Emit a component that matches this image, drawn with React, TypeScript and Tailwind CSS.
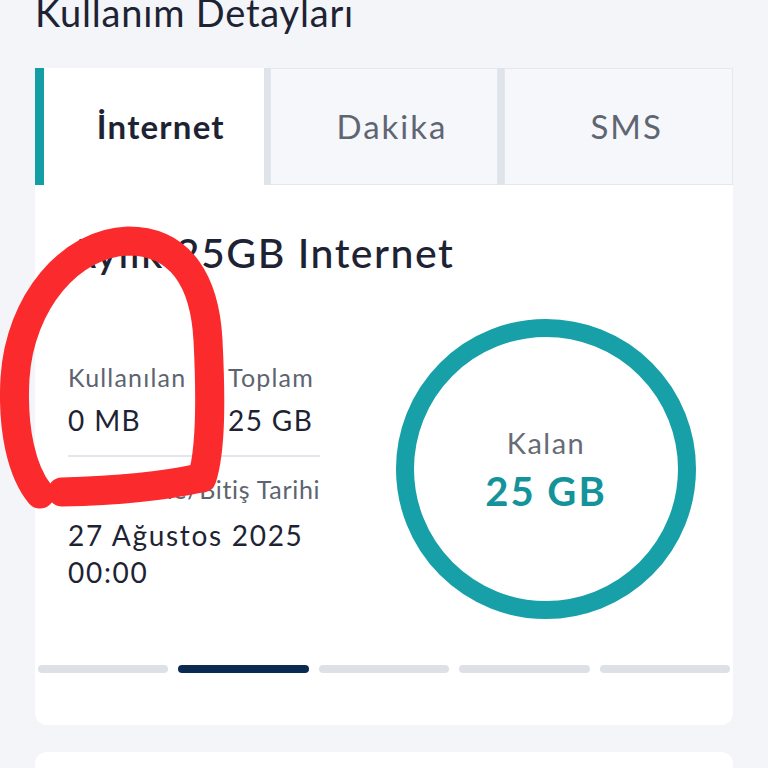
import React from 'react';

const tabs = [
  { label: 'İnternet', active: true },
  { label: 'Dakika', active: false },
  { label: 'SMS', active: false },
];

export default function App() {
  return (
    <div className="relative h-screen overflow-hidden bg-[#f3f5f8] px-[35px] font-['Lato','Noto_Sans',sans-serif] text-[#1e2334]">
      <h1 className="-mt-[10px] text-[38px] leading-[44px] tracking-[0.8px]">Kullanım Detayları</h1>

      {/* tabs */}
      <div className="mt-[34px] grid h-[117px] grid-cols-3 gap-[6px] bg-[#dfe3ea]">
        {tabs.map((t) => (
          <div
            key={t.label}
            className={
              t.active
                ? 'flex items-center justify-center border-l-[9px] border-[#139ea5] bg-white pl-[14px] text-[33px] font-bold tracking-[1.2px] text-[#1e2334]'
                : 'flex items-center justify-center border border-[#e4e7ed] bg-[#f5f7fa] pl-[16px] text-[33px] tracking-[2px] text-[#5f6572]'
            }
          >
            {t.label}
          </div>
        ))}
      </div>

      {/* detail card */}
      <div className="flex h-[540px] flex-col rounded-b-xl bg-white pb-[52px]">
        <h2 className="ml-[33px] mt-[44px] text-[41px] font-medium leading-[48px] tracking-[1.5px]">Aylık 25GB Internet</h2>

        <div className="mt-[42px] flex">
          <div className="ml-[33px] mt-[42px] w-[252px]">
            <div className="grid grid-cols-[160px_1fr]">
              <div>
                <div className="text-[25px] leading-[32px] tracking-[1.2px] text-[#5d6470]">Kullanılan</div>
                <div className="mt-[10px] text-[28px] leading-[34px] tracking-[1.4px]">0 MB</div>
              </div>
              <div>
                <div className="text-[25px] leading-[32px] tracking-[1.2px] text-[#5d6470]">Toplam</div>
                <div className="mt-[10px] text-[28px] leading-[34px] tracking-[1.4px]">25 GB</div>
              </div>
            </div>
            <div className="mt-[18px] h-[2px] bg-[#e3e6eb]" />
            <div className="mt-[16px] whitespace-nowrap text-[25px] leading-[32px] tracking-[0.7px] text-[#5d6470]">Yenilenme/Bitiş Tarihi</div>
            <div className="mt-[12px] whitespace-nowrap text-[28px] leading-[37px] tracking-[1.7px]">
              27 Ağustos 2025
              <br />
              00:00
            </div>
          </div>

          <div className="ml-auto mr-[37px] flex h-[300px] w-[300px] flex-col items-center justify-center rounded-full border-[18px] border-[#17a0a7]">
            <div className="text-[29px] leading-[36px] tracking-[1.5px] text-[#666b76]">Kalan</div>
            <div className="mt-[8px] text-[40px] font-bold leading-[44px] tracking-[2px] text-[#15939b]">25 GB</div>
          </div>
        </div>

        {/* pager */}
        <div className="mt-auto flex gap-[10px] px-[3px]">
          {[0, 1, 2, 3, 4].map((i) => (
            <div key={i} className={i === 1 ? 'h-[8px] flex-1 rounded-sm bg-[#0b2a52]' : 'h-[8px] flex-1 rounded-sm bg-[#dde1e7]'} />
          ))}
        </div>
      </div>

      <div className="mt-[27px] h-[120px] rounded-t-xl bg-white" />

      {/* hand drawn red mark */}
      <svg className="pointer-events-none absolute left-0 top-0" width="768" height="768" viewBox="0 0 768 768">
        <path
          d="M40 494 C22 472 12 430 15 378 C20 302 70 243 128 241 C183 241 205 285 208 340 C211 400 211 450 202 478"
          fill="none"
          stroke="#fb2b2d"
          strokeWidth="29"
          strokeLinecap="round"
          strokeLinejoin="round"
        />
        <path d="M200 478 C160 487 105 491 62 492" fill="none" stroke="#fb2b2d" strokeWidth="29" strokeLinecap="round" />
      </svg>
    </div>
  );
}
